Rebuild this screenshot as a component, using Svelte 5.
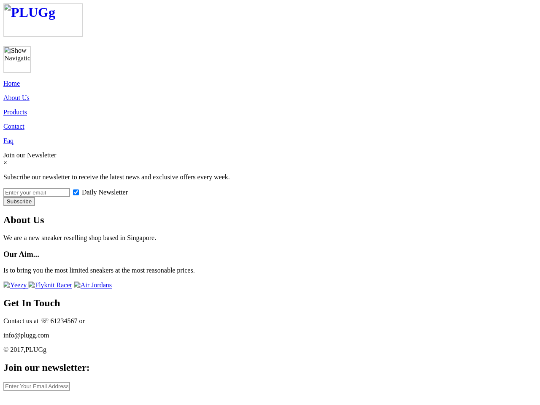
<script>
	let links = ['Home', 'About Us', 'Products', 'Contact', 'Faq'];

	let email = '';
	let footerEmail = '';
	let daily = true;
</script>

<svelte:head>
	<title>PLUGg</title>
</svelte:head>

{#snippet missing()}
	<svg class="missing" width="16" height="16" viewBox="0 0 16 16">
		<path d="M1.5 1.5h9l4 4v3l-3 2-3-2-3.500 3-3.500 2.500z" fill="#c5d7f5" />
		<path d="M2 10q3-5 7 0l-3 2.500-4 1.500z" fill="#4caf50" />
		<path d="M4 5.500q0-1.500 1.500-1.500q1.500-1.500 2.500 0q1.500 0 1.500 1.500z" fill="#fff" />
		<path
			d="M1.500 14.500v-13h9l4 4v3M1.500 14.500l4-3M8 14.500h6.500v-3z"
			fill="none"
			stroke="#949494"
			stroke-width="2"
		/>
		<path d="M10.500 1.500v4h4" fill="#fff" stroke="#949494" stroke-width="1.5" />
	</svg>
{/snippet}

<div class="window">
	<div class="page">
		<h1>
			<a class="logo" href="#home">{@render missing()}<span>PLUGg</span></a>
		</h1>

		<div class="toggle">{@render missing()}Show Navigation</div>

		<nav>
			{#each links as link}
				<p><a href="#{link}">{link}</a></p>
			{/each}
		</nav>

		<div>Join our Newsletter</div>
		<div>×</div>
		<p>Subscribe our newsletter to receive the latest news and exclusive offers every week.</p>

		<form on:submit|preventDefault>
			<div class="row">
				<input type="text" placeholder="Enter your email" bind:value={email} />
				<label><input type="checkbox" bind:checked={daily} />Daily Newsletter</label>
			</div>
			<button type="submit">Subscribe</button>
		</form>

		<h2>About Us</h2>
		<p>We are a new sneaker reselling shop based in Singapore.</p>
		<h3>Our Aim...</h3>
		<p>Is to bring you the most limited sneakers at the most reasonable prices.</p>

		<div class="shoes">
			<a href="#yeezy">{@render missing()}Yeezy&#32;</a><a href="#flyknit">{@render missing()}Flyknit Racer</a>
			<a href="#jordans">{@render missing()}Air Jordans</a>
		</div>

		<h2>Get In Touch</h2>
		<p>Contact us at ☏ 61234567 or</p>
		<p>info@plugg.com</p>
		<p>© 2017,PLUGg</p>

		<h2>Join our newsletter:</h2>
		<input type="text" placeholder="Enter Your Email Address" bind:value={footerEmail} />
	</div>
</div>

<style>
	:global(body) {
		background: #fff;
	}

	.window {
		width: 540px;
		height: 405px;
		overflow: hidden;
	}

	/* 1280px wide page scaled down to the 540px window */
	.page {
		box-sizing: border-box;
		width: 1280px;
		height: 960px;
		padding: 8px;

		transform: scale(0.421875);
		transform-origin: 0 0;
		will-change: transform;

		font-family: 'Liberation Serif', 'Times New Roman', serif;
		font-size: 16px;
		line-height: 18px;
		color: #000;
	}

	a {
		color: #0000ee;
		text-decoration: underline 2px #5a5af3;
		text-underline-offset: 1px;
		text-decoration-skip-ink: none;
	}

	p {
		margin: 16px 0;
	}

	h1 {
		margin: 0 0 21px;
		font-size: 32px;
		line-height: 37px;
	}

	h2 {
		margin: 20px 0;
		font-size: 24px;
		line-height: 27px;
	}

	h3 {
		margin: 19px 0;
		font-size: 18.72px;
		line-height: 21px;
	}

	.logo {
		box-sizing: border-box;
		display: flex;
		align-items: flex-start;
		width: 189px;
		height: 80px;
		border: 2px solid #d6d6d6;
		text-decoration: none;
	}

	.logo span {
		margin-top: 1px;
	}

	.toggle {
		box-sizing: border-box;
		width: 65px;
		height: 64px;
		border: 2px solid #d6d6d6;
		overflow: hidden;
	}

	.missing {
		flex: none;
		vertical-align: -2px;
	}

	.row {
		display: flex;
		align-items: center;
		height: 22px;
	}

	label {
		display: flex;
		align-items: center;
	}

	input[type='text'] {
		box-sizing: border-box;
		display: block;
		width: 158px;
		height: 21px;
		margin: 0;
		padding: 1px 2px;
		border: 2px solid #a0a0a0;
		font-family: 'Liberation Sans', Arial, sans-serif;
		font-size: 13.333px;
	}

	input::placeholder {
		color: #757575;
	}

	input[type='checkbox'] {
		width: 14px;
		height: 14px;
		margin: 0 7px;
	}

	button {
		box-sizing: border-box;
		display: block;
		width: 75px;
		height: 21px;
		padding: 0;
		border: 2px solid #a0a0a0;
		background: #efefef;
		font-family: 'Liberation Sans', Arial, sans-serif;
		font-size: 13.333px;
		line-height: 15px;
		color: #000;
	}

	.shoes {
		margin-top: 17px;
	}
</style>
